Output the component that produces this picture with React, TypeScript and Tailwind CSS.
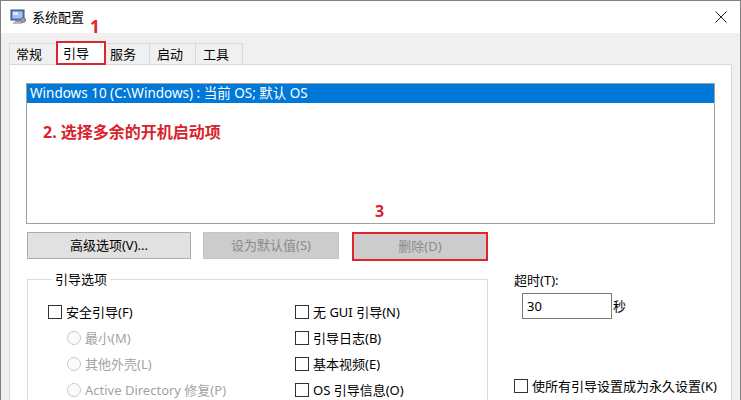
import React from "react";

function Check({ label }: { label: string }) {
  return (
    <div className="flex items-center h-[26px]">
      <span className="w-[14px] h-[14px] border border-[#333333] bg-white shrink-0" />
      <span className="ml-[4px] text-[13px] text-black whitespace-nowrap">{label}</span>
    </div>
  );
}

function Radio({ label }: { label: string }) {
  return (
    <div className="flex items-center h-[26px] pl-[19px]">
      <span className="w-[14px] h-[14px] rounded-full border border-[#c8c8c8] bg-[#fbfbfb] shrink-0" />
      <span className="ml-[4px] text-[13px] text-[#a3a3a3] whitespace-nowrap">{label}</span>
    </div>
  );
}

export default function App() {
  return (
    <div className="relative w-[741px] h-[400px] overflow-hidden bg-[#f0f0f0] border-l border-t border-r border-[#808080] font-['Noto_Sans','Noto_Sans_CJK_SC',sans-serif] leading-[17px]">
      {/* Title bar */}
      <div className="h-[32px] bg-white flex items-center">
        <svg className="ml-[9px]" width="16" height="16" viewBox="0 0 16 16">
          <rect x="1" y="1" width="13" height="10" fill="#5d7fb8" stroke="#3b4f7a" strokeWidth="1" />
          <rect x="2.5" y="2.5" width="10" height="7" fill="#9ec3ee" />
          <rect x="3" y="3" width="5" height="3" fill="#d8ebff" />
          <rect x="5" y="11" width="5" height="2" fill="#8a8f99" />
          <rect x="3" y="13" width="9" height="2" fill="#b5bac4" />
          <circle cx="13" cy="11" r="2.5" fill="#9aa0aa" stroke="#5a606a" strokeWidth="0.8" />
        </svg>
        <span className="ml-[6px] text-[13px] text-black">系统配置</span>
        <div className="flex-1" />
        <svg className="mr-[13px]" width="12" height="12" viewBox="0 0 12 12">
          <path d="M0.5 0.5 L11.5 11.5 M11.5 0.5 L0.5 11.5" stroke="#222" strokeWidth="1" />
        </svg>
      </div>

      {/* Tabs */}
      <div className="flex items-end h-[31px] pl-[8px] relative z-10">
        <div className="w-[47px] h-[21px] pl-[6px] flex items-center text-[13px] text-black border-t border-l border-[#d9d9d9] bg-[#f0f0f0]">常规</div>
        <div className="w-[50px] h-[24px] pl-[5px] flex items-center text-[13px] text-black bg-white border-2 border-[#e0242c] -mb-[1px]">引导</div>
        <div className="w-[44px] h-[21px] pl-[4px] flex items-center text-[13px] text-black border-t border-r border-[#d9d9d9] bg-[#f0f0f0]">服务</div>
        <div className="w-[46px] h-[21px] pl-[7px] flex items-center text-[13px] text-black border-t border-r border-[#d9d9d9] bg-[#f0f0f0]">启动</div>
        <div className="w-[47px] h-[21px] pl-[7px] flex items-center text-[13px] text-black border-t border-r border-[#d9d9d9] bg-[#f0f0f0]">工具</div>
      </div>

      {/* Panel */}
      <div className="ml-[8px] w-[723px] h-[400px] bg-white border border-[#d9d9d9] px-[16px] pt-[18px]">
        {/* Listbox */}
        <div className="relative h-[141px] border border-[#a0a0a0] bg-white">
          <div className="h-[19px] bg-[#0078d7] text-white text-[13.5px] pl-[3px] flex items-center whitespace-nowrap">
            Windows 10 (C:\Windows) : 当前 OS; 默认 OS
          </div>
          <div className="absolute left-[16px] top-[38px] text-[16px] font-bold text-[#d9232c] whitespace-nowrap leading-[20px]">
            2. 选择多余的开机启动项
          </div>
        </div>

        <div className="flex">
          {/* Left column */}
          <div className="w-[463px] ml-[1px]">
            <div className="flex mt-[8px] h-[29px] items-start">
              <div className="w-[164px] h-[27px] bg-[#e1e1e1] border border-[#adadad] flex items-center justify-center text-[13px] text-black">
                高级选项(V)...
              </div>
              <div className="ml-[12px] w-[136px] h-[27px] bg-[#cccccc] border border-[#c4c4c4] flex items-center justify-center text-[13px] text-[#8a8a8a]">
                设为默认值(S)
              </div>
              <div className="ml-[13px] w-[136px] h-[29px] border-2 border-[#e0242c] bg-[#cccccc] flex items-center justify-center text-[13px] text-[#8a8a8a]">
                删除(D)
              </div>
            </div>

            <fieldset className="mt-[10px] border border-[#dcdcdc] h-[200px] pl-[20px] pt-[11px]">
              <legend className="ml-[4px] px-[3px] text-[13px] text-black">引导选项</legend>
              <div className="flex">
                <div className="w-[247px]">
                  <Check label="安全引导(F)" />
                  <Radio label="最小(M)" />
                  <Radio label="其他外壳(L)" />
                  <Radio label="Active Directory 修复(P)" />
                </div>
                <div>
                  <Check label="无 GUI 引导(N)" />
                  <Check label="引导日志(B)" />
                  <Check label="基本视频(E)" />
                  <Check label="OS 引导信息(O)" />
                </div>
              </div>
            </fieldset>
          </div>

          {/* Right column */}
          <div className="ml-[26px] mt-[48px]">
            <div className="text-[13px] text-black">超时(T):</div>
            <div className="flex items-center mt-[4px] ml-[8px]">
              <div className="w-[90px] h-[26px] border border-[#7a7a7a] bg-white text-[13px] text-black pl-[4px] flex items-center">30</div>
              <span className="ml-[1px] text-[13px] text-black">秒</span>
            </div>
            <div className="mt-[54px] flex items-center h-[26px]">
              <span className="w-[14px] h-[14px] border border-[#333333] bg-white shrink-0" />
              <span className="ml-[4px] text-[13px] text-black whitespace-nowrap">使所有引导设置成为永久设置(K)</span>
            </div>
          </div>
        </div>
      </div>

      {/* Annotations */}
      <div className="absolute left-[89px] top-[16px] text-[17px] font-bold text-[#e0242c] leading-[20px]">1</div>
      <div className="absolute left-[374px] top-[200px] text-[16px] font-bold text-[#d9232c] leading-[20px]">3</div>
    </div>
  );
}
